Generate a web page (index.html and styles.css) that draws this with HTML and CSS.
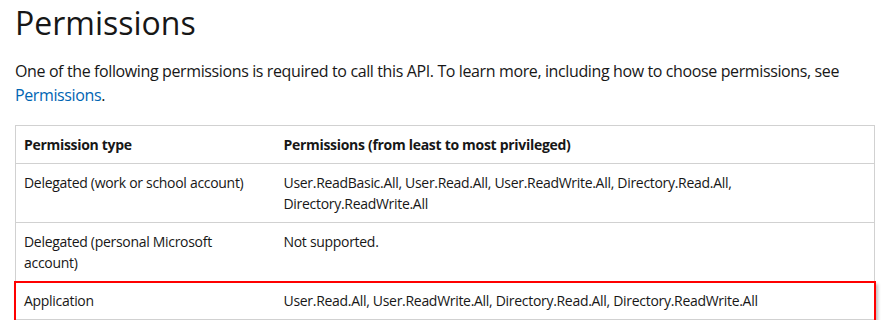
FILE: index.html
```html
<!DOCTYPE html>
<html lang="en">
<head>
<meta charset="utf-8">
<link rel="stylesheet" href="styles.css">
</head>
<body>
<main class="content">
  <h2 class="title">Permissions</h2>
  <p class="intro">One of the following permissions is required to call this API. To learn more, including how to choose permissions, see <a class="link" href="#">Permissions</a>.</p>
  <div class="table-wrap">
    <table class="perm-table">
      <colgroup>
        <col class="col-type">
        <col class="col-perms">
      </colgroup>
      <thead>
        <tr>
          <th>Permission type</th>
          <th>Permissions (from least to most privileged)</th>
        </tr>
      </thead>
      <tbody>
        <tr>
          <td>Delegated (work or school account)</td>
          <td>User.ReadBasic.All, User.Read.All, User.ReadWrite.All, Directory.Read.All, Directory.ReadWrite.All</td>
        </tr>
        <tr>
          <td>Delegated (personal Microsoft account)</td>
          <td>Not supported.</td>
        </tr>
        <tr>
          <td>Application</td>
          <td>User.Read.All, User.ReadWrite.All, Directory.Read.All, Directory.ReadWrite.All</td>
        </tr>
      </tbody>
    </table>
    <div class="highlight"></div>
  </div>
</main>
</body>
</html>
```
FILE: styles.css
```css
html, body {
  margin: 0;
  padding: 0;
  background: #ffffff;
}

body {
  font-family: "Open Sans", "Noto Sans", "Liberation Sans", sans-serif;
  color: #171717;
}

.content {
  padding: 0 9px 0 15px;
}

.title {
  margin: 0;
  font-size: 32px;
  line-height: 46px;
  font-weight: 400;
  color: #171717;
}

.intro {
  margin: 13px 0 0 0;
  font-size: 16px;
  line-height: 24px;
  letter-spacing: -0.38px;
  color: #171717;
}

.link {
  color: #0065b3;
  text-decoration: none;
}

.table-wrap {
  position: relative;
  margin-top: 18px;
  width: 860px;
}

.perm-table {
  width: 100%;
  table-layout: fixed;
  border-collapse: collapse;
  border: 1px solid #d1d1d1;
  font-size: 14px;
  letter-spacing: -0.3px;
  line-height: 21px;
  color: #171717;
}

.col-type {
  width: 260px;
}

.perm-table th,
.perm-table td {
  text-align: left;
  vertical-align: top;
  padding: 8px;
  border-bottom: 1px solid #d1d1d1;
}

.perm-table th {
  font-weight: 700;
}

.highlight {
  position: absolute;
  left: -1px;
  right: -1px;
  bottom: -2px;
  height: 41px;
  border: 2px solid #ff0000;
  box-sizing: border-box;
  box-shadow: 2px 3px 3px rgba(0, 0, 0, 0.25);
  pointer-events: none;
}
```
